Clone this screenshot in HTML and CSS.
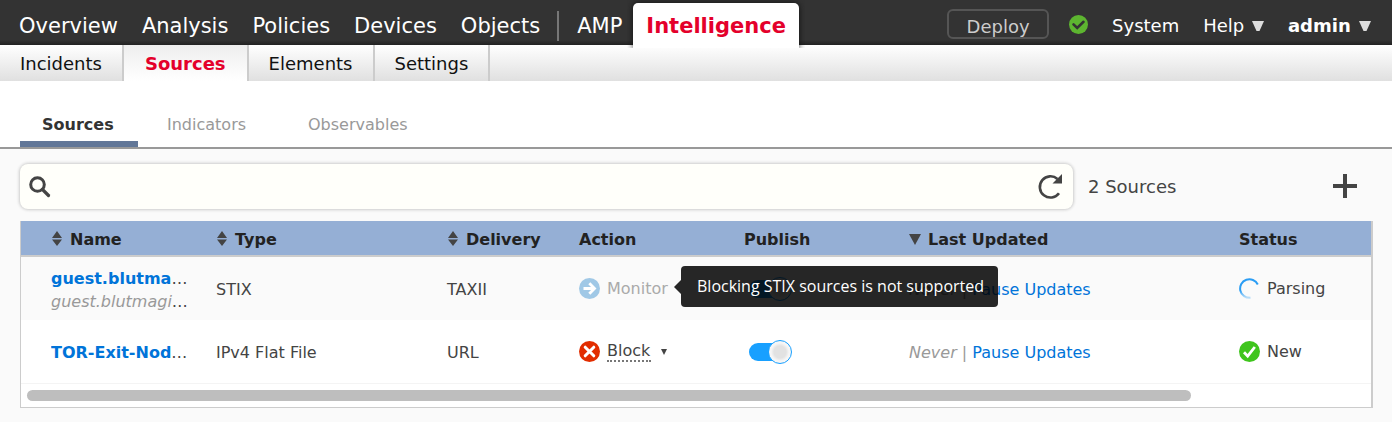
FILE: index.html
```html
<!DOCTYPE html>
<html lang="en">
<head>
  <meta charset="UTF-8">
  <meta name="viewport" content="width=device-width, initial-scale=1.0">
  <title>Intelligence - Sources</title>
  <link rel="stylesheet" href="styles.css">
</head>
<body>

  <!-- Top bar -->
  <header class="topbar">
    <nav class="main-nav">
      <a href="#">Overview</a>
      <a href="#">Analysis</a>
      <a href="#">Policies</a>
      <a href="#">Devices</a>
      <a href="#">Objects</a>
      <span class="divider"></span>
      <a href="#">AMP</a>
      <a href="#" class="current">Intelligence</a>
    </nav>
    <div class="user-nav">
      <button class="deploy">Deploy</button>
      <svg class="health" viewBox="0 0 19 19">
        <circle cx="9.5" cy="9.5" r="9.5" fill="#5db530"/>
        <path d="M4.5 9.3l3.7 3.7 6.3-6.2" fill="none" stroke="#333" stroke-width="2.6" stroke-linecap="round"/>
      </svg>
      <a href="#">System</a>
      <a href="#">Help <svg class="caret" viewBox="0 0 12 11"><path d="M0 0h12L7.5 10h-3z"/></svg></a>
      <a href="#" class="user">admin <svg class="caret" viewBox="0 0 12 11"><path d="M0 0h12L7.5 10h-3z"/></svg></a>
    </div>
  </header>

  <!-- Section bar -->
  <nav class="sub-nav">
    <a href="#">Incidents</a>
    <a href="#" class="current">Sources</a>
    <a href="#">Elements</a>
    <a href="#">Settings</a>
  </nav>

  <!-- Page tabs -->
  <nav class="tabs">
    <a href="#" class="active">Sources</a>
    <a href="#">Indicators</a>
    <a href="#">Observables</a>
  </nav>

  <main>
    <div class="toolbar">
      <div class="search">
        <svg class="search-icon" viewBox="0 0 22 22">
          <circle cx="8.5" cy="8.5" r="6.8" fill="none" stroke="#444" stroke-width="3"/>
          <path d="M13.5 13.5l6 6" stroke="#444" stroke-width="3.2" stroke-linecap="round"/>
        </svg>
        <input type="text" aria-label="Search sources">
        <button class="icon-btn" aria-label="Refresh">
          <svg class="refresh-icon" viewBox="0 0 26 26">
            <path d="M22 19.2A10.6 10.6 0 1 1 20.5 5" fill="none" stroke="#444" stroke-width="2.6"/>
            <path d="M25 0v9.5H15.5z" fill="#444"/>
          </svg>
        </button>
      </div>
      <span class="count">2 Sources</span>
      <button class="icon-btn add" aria-label="Add source">
        <svg class="add-icon" viewBox="0 0 24 24"><path d="M12 0v24M0 12h24" stroke="#444" stroke-width="4"/></svg>
      </button>
    </div>

    <div class="grid">
      <table>
        <colgroup>
          <col class="col-name">
          <col class="col-type">
          <col class="col-delivery">
          <col class="col-action">
          <col class="col-publish">
          <col class="col-updated">
          <col class="col-status">
        </colgroup>
        <thead>
          <tr>
            <th><svg class="sort" viewBox="0 0 10 15"><path d="M5 0l5 7H0zM0 8.5h10L5 15z"/></svg>Name</th>
            <th><svg class="sort" viewBox="0 0 10 15"><path d="M5 0l5 7H0zM0 8.5h10L5 15z"/></svg>Type</th>
            <th><svg class="sort" viewBox="0 0 10 15"><path d="M5 0l5 7H0zM0 8.5h10L5 15z"/></svg>Delivery</th>
            <th>Action</th>
            <th>Publish</th>
            <th><svg class="sorted" viewBox="0 0 12 11"><path d="M0 0h12L6 11z"/></svg>Last Updated</th>
            <th>Status</th>
          </tr>
        </thead>
        <tbody>
          <tr>
            <td>
              <div class="name"><a href="#">guest.blutmagie.de</a></div>
              <div class="name"><em>guest.blutmagie.de</em></div>
            </td>
            <td>STIX</td>
            <td>TAXII</td>
            <td>
              <div class="cell disabled">
                <svg class="badge" viewBox="0 0 21 21">
                  <circle cx="10.5" cy="10.5" r="10.5" fill="#a0c8e6"/>
                  <path d="M4.5 10.5h10M10.3 5.3l5.2 5.2-5.2 5.2" fill="none" stroke="#fff" stroke-width="2.8"/>
                </svg>
                Monitor
                <div class="tooltip" role="tooltip">Blocking STIX sources is not supported</div>
              </div>
            </td>
            <td><input type="checkbox" class="toggle" aria-label="Publish guest.blutmagie.de" checked></td>
            <td><em>Never</em> <span class="bar">|</span> <a href="#">Pause Updates</a></td>
            <td>
              <div class="cell">
                <svg class="badge" viewBox="0 0 21 21">
                  <defs>
                    <linearGradient id="fade" x1="0" y1="0" x2="0" y2="1">
                      <stop offset="0.6" stop-color="#2a9df4"/>
                      <stop offset="1" stop-color="#2a9df4" stop-opacity="0.3"/>
                    </linearGradient>
                  </defs>
                  <path d="M18.8 6.5A9.3 9.3 0 1 0 11.5 19.8" fill="none" stroke="url(#fade)" stroke-width="2"/>
                </svg>
                Parsing
              </div>
            </td>
          </tr>
          <tr>
            <td><div class="name"><a href="#">TOR-Exit-Node-List</a></div></td>
            <td>IPv4 Flat File</td>
            <td>URL</td>
            <td>
              <div class="cell">
                <svg class="badge" viewBox="0 0 21 21">
                  <circle cx="10.5" cy="10.5" r="10.5" fill="#e22d00"/>
                  <path d="M6.2 6.2l8.6 8.6M14.8 6.2l-8.6 8.6" stroke="#fff" stroke-width="3" stroke-linecap="round"/>
                </svg>
                <select class="action" aria-label="Action">
                  <option>Block</option>
                  <option>Monitor</option>
                </select>
                <svg class="small-caret" viewBox="0 0 6 6"><path d="M0 0h6L3 6z"/></svg>
              </div>
            </td>
            <td><input type="checkbox" class="toggle" aria-label="Publish TOR-Exit-Node-List" checked></td>
            <td><em>Never</em> <span class="bar">|</span> <a href="#">Pause Updates</a></td>
            <td>
              <div class="cell">
                <svg class="badge" viewBox="0 0 21 21">
                  <circle cx="10.5" cy="10.5" r="10.5" fill="#3fc51d"/>
                  <path d="M5 11.2l3.7 3.9L15.8 6" fill="none" stroke="#fff" stroke-width="2.8"/>
                </svg>
                New
              </div>
            </td>
          </tr>
        </tbody>
      </table>
      <div class="scrollbar"><div class="thumb"></div></div>
    </div>
  </main>

</body>
</html>
```
FILE: styles.css
```css
*, *::before, *::after {
  box-sizing: border-box;
}

body {
  margin: 0;
  min-height: 100vh;
  display: flex;
  flex-direction: column;
  font-family: "DejaVu Sans", Verdana, sans-serif;
  font-size: 16px;
  color: #444;
  background: #fff;
}

a {
  color: #0074d9;
  text-decoration: none;
}

button, input, select {
  font: inherit;
  color: inherit;
}

/* top bar */
.topbar {
  display: flex;
  justify-content: space-between;
  height: 45px;
  background: linear-gradient(#333 40px, #222);
}

.topbar a {
  color: #fff;
}

.main-nav {
  display: flex;
  gap: 24px;
  padding: 3px 0 0 19px;
  font-size: 21px;
  line-height: 46px;
}

.main-nav .divider {
  width: 2px;
  height: 30px;
  margin: 8px -6px 0 -7px;
  background: #777;
}

.main-nav .current {
  height: 45px;
  margin-left: -13px;
  padding: 0 13px;
  border-radius: 5px 5px 0 0;
  background: #fff;
  box-shadow: 0 0 6px #111;
  clip-path: inset(-6px -6px 0 -6px);
  color: #e4002b;
  font-weight: bold;
  z-index: 1;
}

.user-nav {
  display: flex;
  align-items: center;
  gap: 24px;
  padding: 6px 21px 0 0;
  font-size: 18px;
}

.deploy {
  width: 102px;
  height: 30px;
  margin: 0 -4px 3px 0;
  padding: 5px 0 0;
  border: 2px solid #555;
  border-radius: 6px;
  background: none;
  color: #ccc;
  line-height: 22px;
}

.health {
  width: 19px;
  height: 19px;
  margin-bottom: 2px;
}

.caret {
  width: 12px;
  height: 11px;
  margin-left: 2px;
  fill: #ddd;
}

.user {
  font-weight: bold;
}

/* section bar */
.sub-nav {
  display: flex;
  height: 36px;
  background: linear-gradient(#fff, #e0e0e0);
  font-size: 18px;
  line-height: 37px;
}

.sub-nav a {
  padding: 0 20px;
  border-right: 2px solid #ccc;
  color: #111;
}

.sub-nav .current {
  padding: 0 21px;
  background: linear-gradient(#eee, #fff);
  color: #e4002b;
  font-weight: bold;
}

/* page tabs */
.tabs {
  display: flex;
  align-items: flex-end;
  height: 68px;
  padding-left: 20px;
  border-bottom: 2px solid #999;
}

.tabs a {
  min-width: 141px;
  padding: 0 29px;
  border-bottom: 6px solid transparent;
  color: #999;
  line-height: 32px;
}

.tabs .active {
  min-width: 118px;
  padding: 0 22px;
  border-color: #627798;
  color: #333;
  font-weight: bold;
}

/* content */
main {
  flex: 1;
  padding: 15px 19px 15px 20px;
  background: #fafafa;
}

.toolbar {
  display: flex;
  align-items: center;
  margin-bottom: 12px;
}

.search {
  flex: 1;
  display: flex;
  align-items: center;
  height: 45px;
  padding: 0 10px 0 9px;
  border-radius: 8px;
  background: #fffffa;
  box-shadow: 0 0 3px 1px #ccc;
}

.search input {
  flex: 1;
  padding: 8px;
  border: 0;
  outline: 0;
  background: none;
}

.search-icon {
  width: 22px;
  height: 22px;
}

.icon-btn {
  display: flex;
  padding: 0;
  border: 0;
  background: none;
  cursor: pointer;
}

.refresh-icon {
  width: 26px;
  height: 26px;
}

.count {
  width: 245px;
  margin-left: 15px;
  font-size: 18px;
}

.add {
  margin: 0 16px 1px 0;
}

.add-icon {
  width: 24px;
  height: 24px;
}

/* sources table */
.grid {
  border: 1px solid #ccc;
  border-top: 0;
  border-right-width: 2px;
  background: #fff;
}

table {
  width: 100%;
  table-layout: fixed;
  border-collapse: separate;
  border-spacing: 0;
}

.col-name { width: 195px; }
.col-type { width: 231px; }
.col-delivery { width: 132px; }
.col-action { width: 165px; }
.col-publish { width: 165px; }
.col-updated { width: 330px; }
.col-status { width: 132px; }

th, td {
  padding: 2px 0 0;
  text-align: left;
  white-space: nowrap;
}

th:first-child, td:first-child {
  padding: 2px 24px 0 30px;
}

th {
  height: 36px;
  border-bottom: 2px solid #ccc;
  background: #95afd5;
  color: #222;
}

td {
  height: 63px;
}

tbody tr:first-child td {
  background: #fafafa;
}

tbody tr:last-child td {
  height: 64px;
  border-bottom: 1px solid #f4f4f4;
}

.sort {
  width: 10px;
  height: 15px;
  margin: 0 8px 0 1px;
  vertical-align: -1px;
  fill: #444;
}

.sorted {
  width: 12px;
  height: 11px;
  margin-right: 7px;
  fill: #444;
}

.name {
  overflow: hidden;
  text-overflow: ellipsis;
  line-height: 23px;
}

.name a {
  font-weight: bold;
}

em, .bar {
  color: #999;
}

.cell {
  position: relative;
  display: flex;
  align-items: center;
  gap: 7px;
  margin-bottom: 2px;
}

.disabled {
  color: #aaa;
}

.badge {
  width: 21px;
  height: 21px;
}

.action {
  width: 44px;
  padding: 0;
  border: 0;
  border-bottom: 2px dotted #777;
  border-radius: 0;
  appearance: none;
  background: none;
}

.small-caret {
  width: 6px;
  height: 6px;
  margin-left: 3px;
  fill: #444;
}

/* switch: track and knob share one grid cell */
.toggle {
  display: grid;
  align-items: center;
  width: 43px;
  height: 24px;
  margin: 0 0 2px 5px;
  appearance: none;
}

.toggle::before {
  content: "";
  grid-area: 1 / 1;
  width: 34px;
  height: 18px;
  border-radius: 9px;
  background: #18a0ff;
}

.toggle::after {
  content: "";
  grid-area: 1 / 1;
  width: 24px;
  height: 24px;
  border: 1px solid #18a0ff;
  border-radius: 50%;
  background: radial-gradient(#e2e2e2 6px, #f6f6f6 9px);
}

.toggle:checked::after {
  justify-self: end;
}

.tooltip {
  position: absolute;
  left: 102px;
  top: -12px;
  z-index: 2;
  padding: 0 14px 0 16px;
  border-radius: 4px;
  background: rgba(0, 0, 0, 0.85);
  color: #fff;
  font-family: "Open Sans", "Noto Sans", sans-serif;
  font-size: 16px;
  line-height: 41px;
}

.tooltip::before {
  content: "";
  position: absolute;
  left: -7px;
  top: 14px;
  border: 7px solid transparent;
  border-left: 0;
  border-right-color: rgba(0, 0, 0, 0.85);
}

.scrollbar {
  padding: 6px;
  height: 23px;
}

.thumb {
  width: 87%;
  height: 11px;
  border-radius: 6px;
  background: #bebebe;
}
```
